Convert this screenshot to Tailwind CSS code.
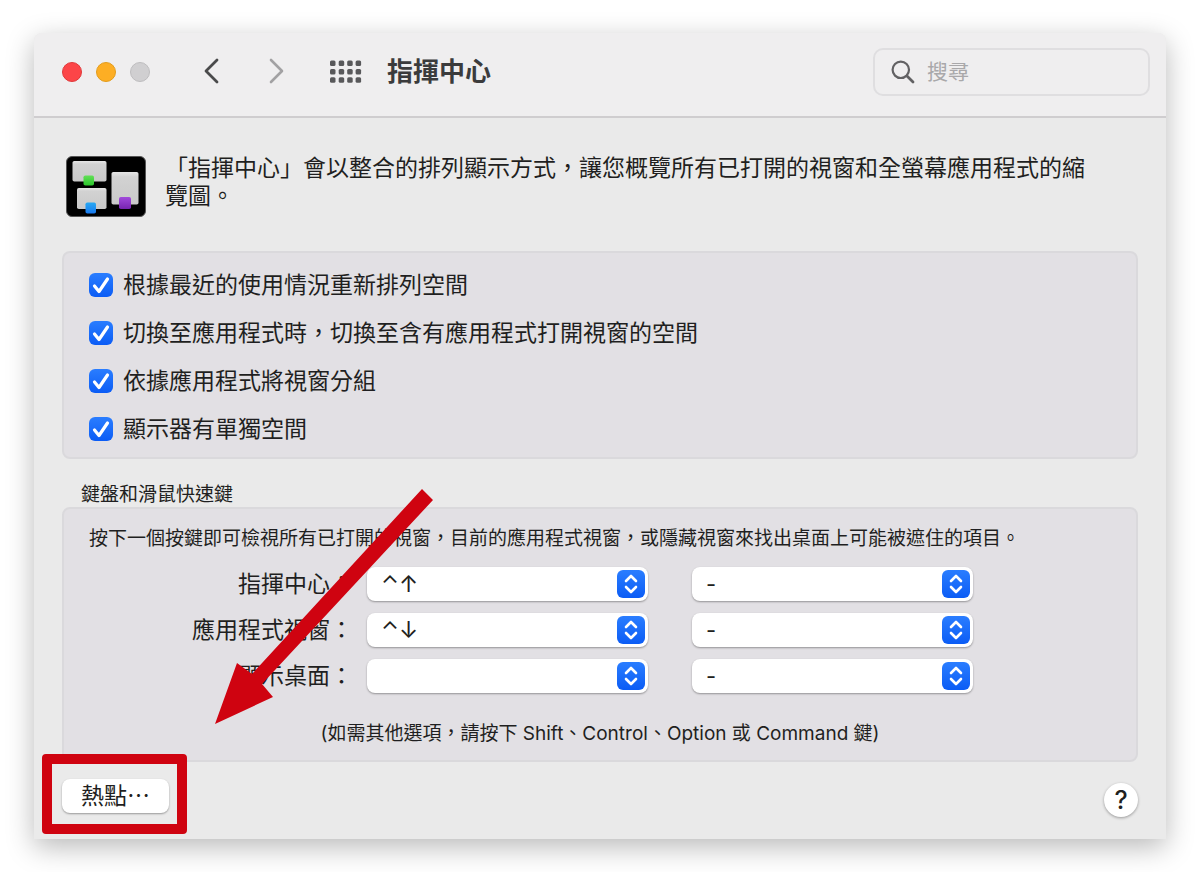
<!DOCTYPE html>
<html lang="zh-Hant">
<head>
<meta charset="utf-8">
<meta name="viewport" content="width=device-width, initial-scale=1">
<title>指揮中心</title>
<script src="https://cdn.jsdelivr.net/npm/@tailwindcss/browser@4"></script>
</head>
<body class="bg-white px-[34px] py-[33px] font-['Inter','Noto_Sans_CJK_TC',sans-serif] text-[#1f1f21]">
<svg class="hidden" aria-hidden="true">
  <symbol id="updown" viewBox="0 0 28 28">
    <path d="M9 11l5-5 5 5M9 17l5 5 5-5" fill="none" stroke="#fff" stroke-width="2.6" stroke-linecap="round" stroke-linejoin="round"/>
  </symbol>
  <symbol id="tick" viewBox="0 0 24 24">
    <path d="M5.500 13l4.500 5.500L18.500 6" fill="none" stroke="#fff" stroke-width="3.200" stroke-linecap="round" stroke-linejoin="round"/>
  </symbol>
</svg>

<div class="rounded-t-lg bg-[#eaeaea] shadow-[0_8px_28px_rgba(0,0,0,0.28)]">
  <header class="flex h-[85px] items-center rounded-t-lg border-b-2 border-[#cfcdcf] bg-[#efeeef] pr-4 pb-[6px] pl-7">
    <div class="flex gap-[14px]">
      <button aria-label="關閉" class="size-[20px] rounded-full border border-[#e0383a] bg-[#fc4548]"></button>
      <button aria-label="縮到最小" class="size-[20px] rounded-full border border-[#e39c1c] bg-[#fdae24]"></button>
      <button aria-label="縮放" class="size-[20px] rounded-full border border-[#bebdbf] bg-[#d0cfd1]"></button>
    </div>
    <button aria-label="返回" class="ml-[53px]"><svg class="h-7 w-4" viewBox="0 0 16 28"><path d="M14 2L3 13l11 11" fill="none" stroke="#4a4a4b" stroke-width="2.800" stroke-linecap="round" stroke-linejoin="round"/></svg></button>
    <button aria-label="前進" class="ml-[49px]"><svg class="h-7 w-4" viewBox="0 0 16 28"><path d="M3 2l11 11L3 24" fill="none" stroke="#a2a1a3" stroke-width="2.600" stroke-linecap="round" stroke-linejoin="round"/></svg></button>
    <button aria-label="顯示全部" class="ml-[46px]"><svg class="h-[23px] w-8" viewBox="0 0 32 23" fill="#58585a">
      <rect x="0" y="0.500" width="5.500" height="5.500" rx="1.500"/><rect x="8.700" y="0.500" width="5.500" height="5.500" rx="1.500"/><rect x="17.200" y="0.500" width="5.500" height="5.500" rx="1.500"/><rect x="25.600" y="0.500" width="5.500" height="5.500" rx="1.500"/>
      <rect x="0" y="8.900" width="5.500" height="5.500" rx="1.500"/><rect x="8.700" y="8.900" width="5.500" height="5.500" rx="1.500"/><rect x="17.200" y="8.900" width="5.500" height="5.500" rx="1.500"/><rect x="25.600" y="8.900" width="5.500" height="5.500" rx="1.500"/>
      <rect x="0" y="17.200" width="5.500" height="5.500" rx="1.500"/><rect x="8.700" y="17.200" width="5.500" height="5.500" rx="1.500"/><rect x="17.200" y="17.200" width="5.500" height="5.500" rx="1.500"/><rect x="25.600" y="17.200" width="5.500" height="5.500" rx="1.500"/>
    </svg></button>
    <h1 class="ml-[25px] text-[26px] leading-8 font-bold text-[#3b3b3c]">指揮中心</h1>
    <label class="ml-auto flex h-12 w-[277px] items-center gap-3 rounded-[10px] border-2 border-[#dfdee0] pl-4">
      <svg class="size-6 shrink-0" viewBox="0 0 24 24" fill="none" stroke="#626163" stroke-linecap="round"><circle cx="9.800" cy="9.800" r="8.200" stroke-width="2.200"/><path d="M16 16l6 6" stroke-width="2.800"/></svg>
      <input type="search" aria-label="搜尋" placeholder="搜尋" class="w-full min-w-0 bg-transparent text-[21px] leading-8 outline-none placeholder:text-[#a9a8aa]">
    </label>
  </header>

  <main class="px-7 pb-[22px]">
    <div class="flex items-start gap-[19px] pt-9 pr-10 pl-1">
      <svg class="mt-[2px] h-[61px] w-20 shrink-0" viewBox="0 0 80 61" aria-hidden="true">
        <defs>
          <linearGradient id="win" x1="0" y1="0" x2="0" y2="1"><stop offset="0" stop-color="#e6e6e6"/><stop offset="0.150" stop-color="#d2d2d2"/><stop offset="1" stop-color="#c9c9c9"/></linearGradient>
          <linearGradient id="grn" x1="0" y1="0" x2="0" y2="1"><stop offset="0" stop-color="#62e056"/><stop offset="1" stop-color="#2bc62c"/></linearGradient>
          <linearGradient id="blu" x1="0" y1="0" x2="0" y2="1"><stop offset="0" stop-color="#27a9f3"/><stop offset="1" stop-color="#1878ee"/></linearGradient>
          <linearGradient id="pur" x1="0" y1="0" x2="0" y2="1"><stop offset="0" stop-color="#a14adb"/><stop offset="1" stop-color="#7624b0"/></linearGradient>
        </defs>
        <rect x="0.500" y="0.500" width="79" height="60" rx="5.500" fill="#000" stroke="#555"/>
        <rect x="6.500" y="5" width="34" height="20.500" rx="1.800" fill="url(#win)"/>
        <rect x="11" y="32" width="29.500" height="21" rx="1.800" fill="url(#win)"/>
        <rect x="45.500" y="16" width="27" height="32.500" rx="1.800" fill="url(#win)"/>
        <rect x="17.500" y="19.500" width="10.500" height="10" rx="1.800" fill="url(#grn)"/>
        <rect x="19.500" y="46.500" width="10.500" height="11" rx="1.800" fill="url(#blu)"/>
        <rect x="53" y="41" width="12" height="12" rx="1.800" fill="url(#pur)"/>
      </svg>
      <p class="text-[23px] leading-7">「指揮中心」會以整合的排列顯示方式，讓您概覽所有已打開的視窗和全螢幕應用程式的縮覽圖。</p>
    </div>

    <section class="mt-[34px] flex flex-col gap-4 rounded-lg border-2 border-[#dad9dc] bg-[#e2e0e4] px-[25px] pt-4 pb-3 text-[23px] leading-8">
      <label class="flex items-center gap-[10px]"><span class="grid shrink-0"><input type="checkbox" checked class="col-start-1 row-start-1 size-6 appearance-none rounded-md checked:bg-linear-to-b checked:from-[#2a7dff] checked:to-[#0b5cf5]"><svg class="pointer-events-none col-start-1 row-start-1 size-6"><use href="#tick"/></svg></span>根據最近的使用情況重新排列空間</label>
      <label class="flex items-center gap-[10px]"><span class="grid shrink-0"><input type="checkbox" checked class="col-start-1 row-start-1 size-6 appearance-none rounded-md checked:bg-linear-to-b checked:from-[#2a7dff] checked:to-[#0b5cf5]"><svg class="pointer-events-none col-start-1 row-start-1 size-6"><use href="#tick"/></svg></span>切換至應用程式時，切換至含有應用程式打開視窗的空間</label>
      <label class="flex items-center gap-[10px]"><span class="grid shrink-0"><input type="checkbox" checked class="col-start-1 row-start-1 size-6 appearance-none rounded-md checked:bg-linear-to-b checked:from-[#2a7dff] checked:to-[#0b5cf5]"><svg class="pointer-events-none col-start-1 row-start-1 size-6"><use href="#tick"/></svg></span>依據應用程式將視窗分組</label>
      <label class="flex items-center gap-[10px]"><span class="grid shrink-0"><input type="checkbox" checked class="col-start-1 row-start-1 size-6 appearance-none rounded-md checked:bg-linear-to-b checked:from-[#2a7dff] checked:to-[#0b5cf5]"><svg class="pointer-events-none col-start-1 row-start-1 size-6"><use href="#tick"/></svg></span>顯示器有單獨空間</label>
    </section>

    <h2 class="mt-6 pl-[19px] text-[19px] leading-6">鍵盤和滑鼠快速鍵</h2>
    <section class="relative rounded-lg border-2 border-[#dad9dc] bg-[#e2e0e4] px-[25px] pt-[18px] pb-[14px]">
      <p class="text-[19px] leading-6">按下一個按鍵即可檢視所有已打開的視窗，目前的應用程式視窗，或隱藏視窗來找出桌面上可能被遮住的項目。</p>
      <div class="mt-4 grid grid-cols-[264px_281px_281px] items-center gap-y-3 text-[23px] leading-[34px]">
        <label for="mc1" class="text-right">指揮中心：</label>
        <div class="ml-[14px] -mr-[14px] grid"><select id="mc1" class="col-start-1 row-start-1 h-[34px] appearance-none rounded-lg bg-white pr-9 pl-[14px] text-[23px] leading-[30px] shadow-[0_1px_2px_rgba(0,0,0,0.35)]"><option>⌃↑</option></select><svg class="pointer-events-none col-start-1 row-start-1 mr-[3px] size-7 self-center justify-self-end rounded-md bg-linear-to-b from-[#2a7dff] to-[#0b5cf5]"><use href="#updown"/></svg></div>
        <div class="ml-[58px] -mr-[58px] grid"><select aria-label="指揮中心滑鼠按鈕" class="col-start-1 row-start-1 h-[34px] appearance-none rounded-lg bg-white pr-9 pl-[14px] text-[22px] leading-[30px] shadow-[0_1px_2px_rgba(0,0,0,0.35)]"><option>-</option></select><svg class="pointer-events-none col-start-1 row-start-1 mr-[3px] size-7 self-center justify-self-end rounded-md bg-linear-to-b from-[#2a7dff] to-[#0b5cf5]"><use href="#updown"/></svg></div>
        <label for="mc2" class="text-right">應用程式視窗：</label>
        <div class="ml-[14px] -mr-[14px] grid"><select id="mc2" class="col-start-1 row-start-1 h-[34px] appearance-none rounded-lg bg-white pr-9 pl-[14px] text-[23px] leading-[30px] shadow-[0_1px_2px_rgba(0,0,0,0.35)]"><option>⌃↓</option></select><svg class="pointer-events-none col-start-1 row-start-1 mr-[3px] size-7 self-center justify-self-end rounded-md bg-linear-to-b from-[#2a7dff] to-[#0b5cf5]"><use href="#updown"/></svg></div>
        <div class="ml-[58px] -mr-[58px] grid"><select aria-label="應用程式視窗滑鼠按鈕" class="col-start-1 row-start-1 h-[34px] appearance-none rounded-lg bg-white pr-9 pl-[14px] text-[22px] leading-[30px] shadow-[0_1px_2px_rgba(0,0,0,0.35)]"><option>-</option></select><svg class="pointer-events-none col-start-1 row-start-1 mr-[3px] size-7 self-center justify-self-end rounded-md bg-linear-to-b from-[#2a7dff] to-[#0b5cf5]"><use href="#updown"/></svg></div>
        <label for="mc3" class="text-right">顯示桌面：</label>
        <div class="ml-[14px] -mr-[14px] grid"><select id="mc3" class="col-start-1 row-start-1 h-[34px] appearance-none rounded-lg bg-white pr-9 pl-[14px] text-[23px] leading-[30px] shadow-[0_1px_2px_rgba(0,0,0,0.35)]"><option></option></select><svg class="pointer-events-none col-start-1 row-start-1 mr-[3px] size-7 self-center justify-self-end rounded-md bg-linear-to-b from-[#2a7dff] to-[#0b5cf5]"><use href="#updown"/></svg></div>
        <div class="ml-[58px] -mr-[58px] grid"><select aria-label="顯示桌面滑鼠按鈕" class="col-start-1 row-start-1 h-[34px] appearance-none rounded-lg bg-white pr-9 pl-[14px] text-[22px] leading-[30px] shadow-[0_1px_2px_rgba(0,0,0,0.35)]"><option>-</option></select><svg class="pointer-events-none col-start-1 row-start-1 mr-[3px] size-7 self-center justify-self-end rounded-md bg-linear-to-b from-[#2a7dff] to-[#0b5cf5]"><use href="#updown"/></svg></div>
      </div>
      <p class="mt-[29px] text-center text-[19px] leading-6">(如需其他選項，請按下 Shift、Control、Option 或 Command 鍵)</p>
      <svg class="pointer-events-none absolute -top-5 left-[151px] h-[235px] w-[218px]" viewBox="0 0 218 235" aria-hidden="true"><path d="M207 0l11 11L47 195l11 13L0 235l22-61 15 11z" fill="#cf0310"/></svg>
    </section>

    <footer class="flex items-start justify-between pt-[17px]">
      <div class="relative">
        <button class="h-[34px] w-[107px] rounded-lg bg-white text-[23px] leading-[34px] shadow-[0_1px_2px_rgba(0,0,0,0.35)]">熱點⋯</button>
        <div class="pointer-events-none absolute -top-[25px] -right-[18px] -bottom-[21px] -left-5 rounded-[4px] border-[10px] border-[#cf0310]"></div>
      </div>
      <button aria-label="輔助說明" class="mt-1 size-[34px] rounded-full bg-white text-[25px] leading-[34px] font-medium shadow-[0_1px_3px_rgba(0,0,0,0.35)]">?</button>
    </footer>
  </main>
</div>
</body>
</html>
